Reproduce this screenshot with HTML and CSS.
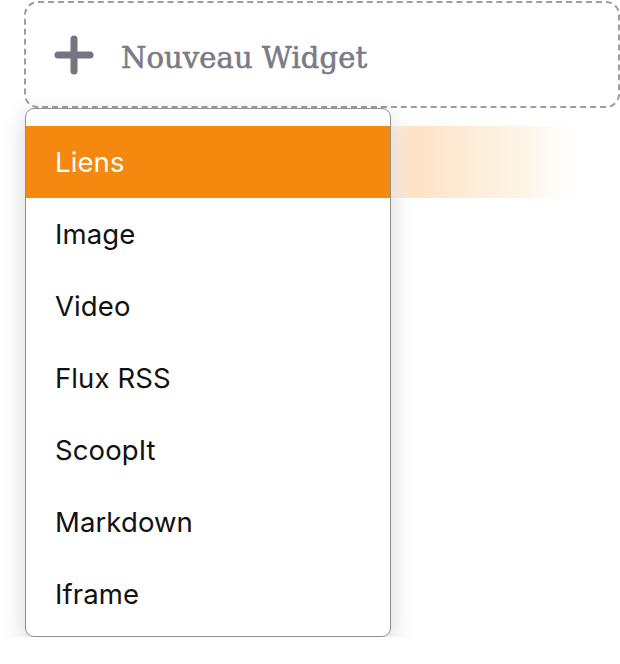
FILE: index.html
```html
<!DOCTYPE html>
<html lang="fr">
<head>
    <meta charset="UTF-8">
    <meta name="viewport" content="width=device-width, initial-scale=1.0">
    <title>Nouveau Widget</title>
    <link rel="stylesheet" href="styles.css">
</head>
<body>
    <div class="page">
        <div class="new-widget">
            <svg class="plus" width="40" height="40" viewBox="0 0 40 40">
                <path d="M20 4 V36 M4 20 H36" stroke="#76757f" stroke-width="7" stroke-linecap="round" fill="none"/>
            </svg>
            <span class="new-label">Nouveau Widget</span>
        </div>

        <ul class="menu">
            <li class="active">Liens</li>
            <li>Image</li>
            <li>Video</li>
            <li>Flux RSS</li>
            <li>ScoopIt</li>
            <li>Markdown</li>
            <li>Iframe</li>
        </ul>
    </div>
</body>
</html>
```

FILE: styles.css
```css
body {
    margin: 0;
    background: #ffffff;
    font-family: Inter, "Liberation Sans", sans-serif;
}
.page {
    padding: 1px 0 0 24px;
}
.new-widget {
    box-sizing: border-box;
    width: 596px;
    height: 107px;
    border: 2px dashed #9e9e9e;
    border-radius: 14px;
    display: flex;
    align-items: center;
    padding-left: 28px;
}
.plus {
    display: block;
}
.new-label {
    margin: 6px 0 0 27px;
    font-family: "DejaVu Serif", serif;
    font-size: 29px;
    color: #7b7a85;
    letter-spacing: 0.1px;
    -webkit-text-stroke: 0.6px #7b7a85;
}
.menu {
    list-style: none;
    box-sizing: border-box;
    width: 366px;
    margin: 0 0 0 1px;
    padding: 17px 0 6px;
    background: #ffffff;
    border: 1.5px solid #8f8f8f;
    border-radius: 9px;
    box-shadow: 0 8px 24px rgba(0, 0, 0, 0.17);
}
.menu li {
    position: relative;
    height: 72px;
    display: flex;
    align-items: center;
    padding-left: 29px;
    font-size: 27.5px;
    letter-spacing: 0.1px;
    color: #111111;
}
.menu li.active {
    background: #f5880f;
    color: #ffffff;
}
.menu li.active::after {
    content: "";
    position: absolute;
    left: 100%;
    top: 0;
    width: 186px;
    height: 72px;
    background: linear-gradient(to right, rgba(245, 136, 15, 0.08), rgba(245, 136, 15, 0.24) 12%, rgba(245, 150, 15, 0.1) 70%, rgba(245, 170, 15, 0) 100%);
}
```
